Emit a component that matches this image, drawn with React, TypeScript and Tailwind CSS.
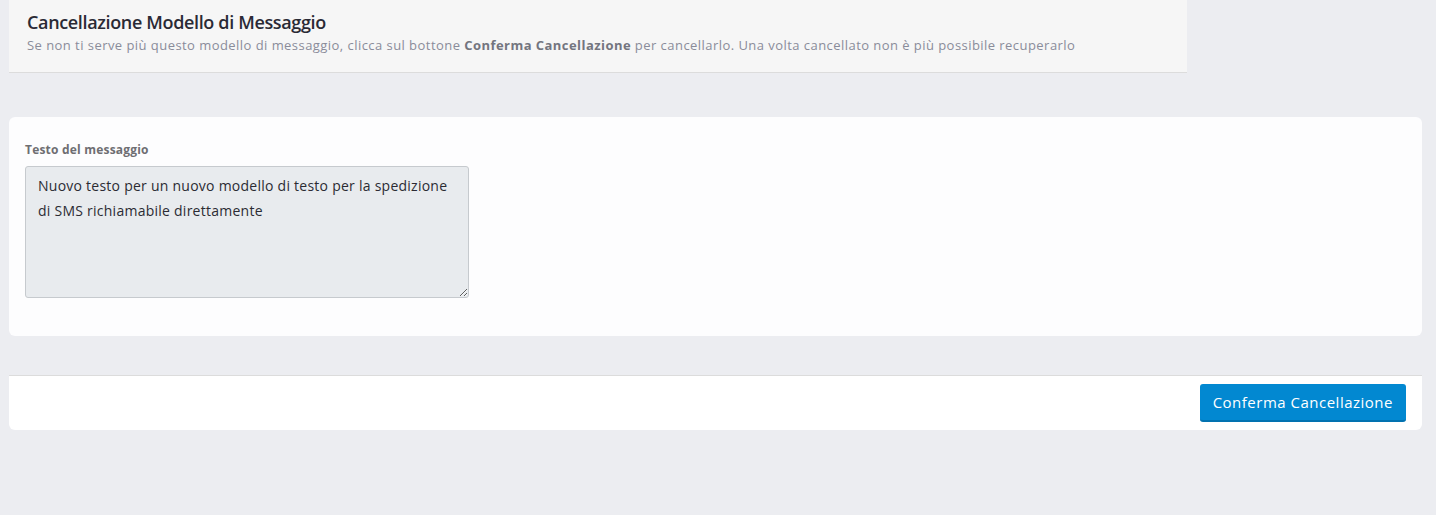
import React from 'react';

const font = { fontFamily: '"Open Sans", "Noto Sans", sans-serif' };

export default function App() {
  return (
    <div className="min-h-[515px] bg-[#ecedf1] pl-[9px] pr-[14px]" style={font}>
      {/* Header */}
      <div className="w-[1178px] bg-[#f6f6f6] border-b border-[#dcdcdc] pl-[18px] pt-[10px] pb-[18px]">
        <h1 className="text-[18px] leading-[24px] font-semibold tracking-[-0.35px] text-[#2a2a35]">
          Cancellazione Modello di Messaggio
        </h1>
        <p className="mt-[2px] text-[13px] leading-[18px] tracking-[0.45px] text-[#8a8c9a]">
          Se non ti serve più questo modello di messaggio, clicca sul bottone{' '}
          <strong className="font-bold text-[#73757f]">Conferma Cancellazione</strong> per cancellarlo. Una volta
          cancellato non è più possibile recuperarlo
        </p>
      </div>

      {/* Card */}
      <div className="mt-[44px] bg-[#fdfdfe] rounded-md px-[16px] pt-[25px] pb-[38px]">
        <label className="block text-[12px] leading-[16px] font-bold tracking-[0.2px] text-[#6e6e72] mb-[8px]">
          Testo del messaggio
        </label>
        <textarea
          readOnly
          className="block w-[444px] h-[132px] bg-[#e8ebee] border border-[#c6cace] rounded-[3px] px-[12px] py-[6px] text-[14px] leading-[25px] tracking-[0.25px] text-[#2b2b33] outline-none"
          value="Nuovo testo per un nuovo modello di testo per la spedizione di SMS richiamabile direttamente"
        />
      </div>

      {/* Footer */}
      <div className="mt-[39px] bg-white border-t border-[#dcdcdc] rounded-b-md flex justify-end px-[16px] py-[8px]">
        <button className="h-[38px] px-[13px] bg-[#0288d1] border-b-2 border-[#0272b0] rounded-[3px] text-white text-[15px] tracking-[0.5px]">
          Conferma Cancellazione
        </button>
      </div>
    </div>
  );
}
